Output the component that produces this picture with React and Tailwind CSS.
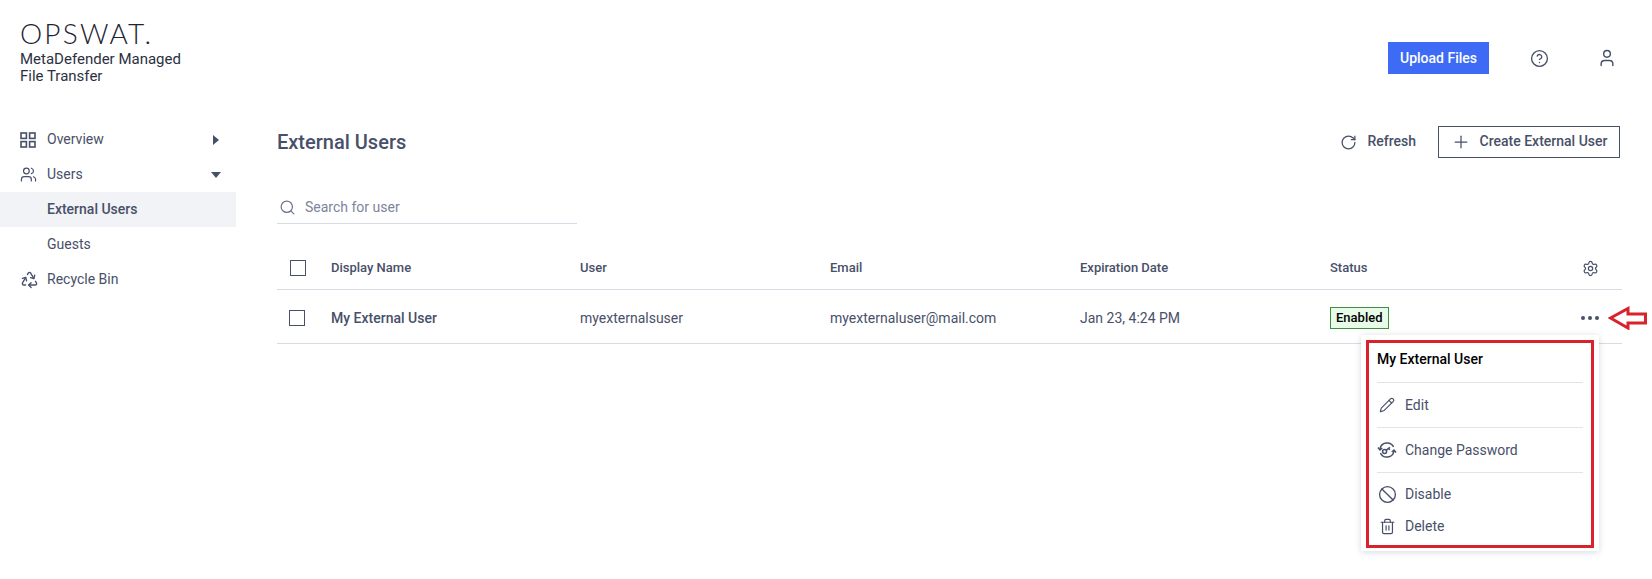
import React from "react";
import {
  Ban,
  CircleHelp,
  Pencil,
  Plus,
  Recycle,
  RotateCw,
  Search,
  Settings,
  Trash2,
  User,
  Users,
} from "lucide-react";

const TEXT = "text-[#485069]";

const GridIcon = () => (
  <svg width="16" height="16" viewBox="0 0 16 16" fill="none" stroke="#485069" strokeWidth="1.6">
    <rect x="1" y="1" width="5.4" height="5.4" />
    <rect x="9.6" y="1" width="5.4" height="5.4" />
    <rect x="1" y="9.6" width="5.4" height="5.4" />
    <rect x="9.6" y="9.6" width="5.4" height="5.4" />
  </svg>
);

const CaretRight = () => (
  <svg width="6" height="10" viewBox="0 0 6 10" fill="#485069">
    <path d="M0 0 L6 5 L0 10 Z" />
  </svg>
);

const CaretDown = () => (
  <svg width="10" height="6" viewBox="0 0 10 6" fill="#485069">
    <path d="M0 0 L10 0 L5 6 Z" />
  </svg>
);

const KeyCycleIcon = () => (
  <svg width="20" height="20" viewBox="0 0 20 20" fill="none" stroke="#485069" strokeWidth="1.5">
    <path d="M3 9 A7.2 7.2 0 0 1 16.6 7" />
    <path d="M17 11 A7.2 7.2 0 0 1 3.4 13" />
    <path d="M1 7.6 L3 10 L5.2 8" />
    <path d="M19 12.4 L17 10 L14.8 12" />
    <circle cx="7.6" cy="11.4" r="2" />
    <path d="M9.2 10.2 L13 7.4 M11.6 8.4 L12.8 9.8" />
  </svg>
);

const SideItem = ({ icon, label, caret, active }) => (
  <div
    className={`flex items-center h-[35px] pl-[20px] pr-[15px] text-[14px] ${TEXT} ${
      active ? "bg-[#f2f3f7] font-medium" : ""
    }`}
  >
    <div className="w-[27px] flex items-center">{icon}</div>
    <span className="flex-1">{label}</span>
    <div className="w-[11px] flex justify-center">{caret}</div>
  </div>
);

const MenuRow = ({ icon, label, className = "" }) => (
  <div className={`flex items-center text-[14px] ${TEXT} ${className}`}>
    <div className="w-[20px] mr-[8px] flex items-center justify-center">{icon}</div>
    {label}
  </div>
);

const Checkbox = () => <div className="w-4 h-4 border border-[#485069]" />;

const App = () => {
  return (
    <div
      className={`relative flex h-[579px] w-[1652px] overflow-hidden bg-white ${TEXT}`}
      style={{ fontFamily: "Roboto, sans-serif" }}
    >
      {/* sidebar */}
      <aside className="w-[236px] shrink-0">
        <div className="h-[122px] pl-[20px] pt-[16px]">
          <div
            className="text-[28px] leading-[35px] font-light tracking-[2.2px] text-[#1d2433]"
            style={{ fontFamily: "Lato, sans-serif" }}
          >
            OPSWAT.
          </div>
          <div className="text-[15px] leading-[17px] text-[#2b3142]">
            MetaDefender Managed
            <br />
            File Transfer
          </div>
        </div>
        <SideItem icon={<GridIcon />} label="Overview" caret={<CaretRight />} />
        <SideItem icon={<Users size={17} strokeWidth={1.7} />} label="Users" caret={<CaretDown />} />
        <SideItem label="External Users" active />
        <SideItem label="Guests" />
        <SideItem icon={<Recycle size={19} strokeWidth={1.7} />} label="Recycle Bin" />
      </aside>

      {/* main */}
      <main className="flex-1 pl-[41px] pr-[30px]">
        <div className="flex items-center justify-end h-[32px] mt-[42px]">
          <button className="w-[101px] h-[32px] bg-[#3d6bf5] text-white text-[14px] font-medium">
            Upload Files
          </button>
          <CircleHelp size={19} strokeWidth={1.7} className="ml-[41px]" />
          <User size={20} strokeWidth={1.7} className="ml-[48px] mr-[5px]" />
        </div>

        <div className="flex items-center h-[32px] mt-[52px]">
          <h1 className="flex-1 text-[20px] font-medium">External Users</h1>
          <RotateCw size={17} strokeWidth={1.8} className="mr-[10px]" />
          <span className="text-[14px] font-medium mr-[22px] pb-[2px]">Refresh</span>
          <button className="flex items-center justify-center gap-[9px] w-[182px] h-[32px] mr-[2px] border border-[#485069] text-[14px] font-medium">
            <Plus size={20} strokeWidth={1.5} />
            <span className="pb-[2px]">Create External User</span>
          </button>
        </div>

        {/* search */}
        <div className="flex items-center w-[300px] h-[32px] mt-[34px] border-b border-[#d8dbe3] pl-[2px]">
          <Search size={17} strokeWidth={1.7} className="text-[#6b7390] mr-[9px]" />
          <span className="text-[14px] text-[#7d849c]">Search for user</span>
        </div>

        {/* table */}
        <div className="flex items-center h-[43px] mt-[23px] border-b border-[#d8dbe3] text-[13px] font-medium">
          <div className="w-[54px] pl-[13px]">
            <Checkbox />
          </div>
          <div className="w-[249px]">Display Name</div>
          <div className="w-[250px]">User</div>
          <div className="w-[250px]">Email</div>
          <div className="w-[250px]">Expiration Date</div>
          <div className="w-[252px]">Status</div>
          <Settings size={17} strokeWidth={1.7} />
        </div>
        <div className="flex items-center h-[54px] pt-[3px] border-b border-[#d8dbe3] text-[14px]">
          <div className="w-[54px] pl-[12px]">
            <Checkbox />
          </div>
          <div className="w-[249px] font-medium">My External User</div>
          <div className="w-[250px]">myexternalsuser</div>
          <div className="w-[250px]">myexternaluser@mail.com</div>
          <div className="w-[250px]">Jan 23, 4:24 PM</div>
          <div className="w-[251px]">
            <span className="inline-flex items-center h-[22px] px-[5px] border border-[#3f8f3f] bg-[#e8fae8] text-[13px] font-medium text-black">
              Enabled
            </span>
          </div>
          <div className="flex gap-[3px]">
            <div className="w-[4px] h-[4px] rounded-full bg-[#485069]" />
            <div className="w-[4px] h-[4px] rounded-full bg-[#485069]" />
            <div className="w-[4px] h-[4px] rounded-full bg-[#485069]" />
          </div>
        </div>
      </main>

      {/* row menu */}
      <div className="absolute left-[1361px] top-[335px] w-[238px] h-[216px] bg-white pt-[5px] px-[5px] pb-[3px] shadow-[0_1px_6px_rgba(72,80,105,0.22)]">
        <div className="h-full border-[3px] border-[#d8222c] px-[8px]">
          <div className="h-[40px] pb-[7px] flex items-center border-b border-[#e2e4ea] text-[14px] font-medium text-black">
            My External User
          </div>
          <MenuRow icon={<Pencil size={16} strokeWidth={1.7} />} label="Edit" className="h-[45px] border-b border-[#e2e4ea]" />
          <MenuRow icon={<KeyCycleIcon />} label="Change Password" className="h-[45px] border-b border-[#e2e4ea]" />
          <MenuRow icon={<Ban size={19} strokeWidth={1.7} />} label="Disable" className="h-[43px]" />
          <MenuRow icon={<Trash2 size={17} strokeWidth={1.7} />} label="Delete" className="h-[20px]" />
        </div>
      </div>

      {/* red arrow annotation */}
      <svg className="absolute left-[1608px] top-[306px]" width="39" height="24" viewBox="0 0 39 24" fill="none" stroke="#d8222c" strokeWidth="3">
        <path d="M2.5 12 L20 2.5 L20 8 L37.5 8 L37.5 17 L20 17 L20 22 Z" />
      </svg>
    </div>
  );
};

export default App;
